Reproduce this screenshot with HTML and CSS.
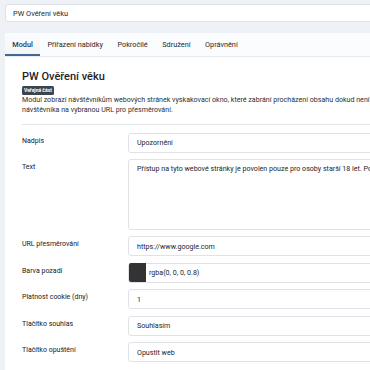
FILE: index.html
```html
<!DOCTYPE html>
<html lang="cs">
<head>
<meta charset="utf-8">
<title>PW Ověření věku</title>
<link rel="stylesheet" href="styles.css">
</head>
<body>
<div class="page">
  <input class="title-field" type="text" value="PW Ověření věku">
  <nav class="tabs">
    <span class="tab active">Modul</span>
    <span class="tab">Přiřazení nabídky</span>
    <span class="tab">Pokročilé</span>
    <span class="tab">Sdružení</span>
    <span class="tab">Oprávnění</span>
  </nav>
  <main class="card">
    <h1 class="heading">PW Ověření věku</h1>
    <span class="badge">Veřejná část</span>
    <p class="desc">Modul zobrazí návštěvníkům webových stránek vyskakovací okno, které zabrání procházení obsahu dokud není<br>návštěvníka na vybranou URL pro přesměrování.</p>
    <hr class="divider">
    <div class="row">
      <label class="label">Nadpis</label>
      <input class="field" type="text" value="Upozornění">
    </div>
    <div class="row">
      <label class="label">Text</label>
      <textarea class="field area">Přístup na tyto webové stránky je povolen pouze pro osoby starší 18 let. Pokračováním potvrzujete, že je vám více než 18 let.</textarea>
    </div>
    <div class="row">
      <label class="label">URL přesměrování</label>
      <input class="field" type="text" value="https://www.google.com">
    </div>
    <div class="row">
      <label class="label">Barva pozadí</label>
      <div class="field color-field"><span class="swatch"></span><span class="color-value">rgba(0, 0, 0, 0.8)</span></div>
    </div>
    <div class="row">
      <label class="label">Platnost cookie (dny)</label>
      <input class="field" type="text" value="1">
    </div>
    <div class="row">
      <label class="label">Tlačítko souhlas</label>
      <input class="field" type="text" value="Souhlasím">
    </div>
    <div class="row">
      <label class="label">Tlačítko opuštění</label>
      <input class="field" type="text" value="Opustit web">
    </div>
  </main>
</div>
</body>
</html>
```
FILE: styles.css
```css
html, body {
  margin: 0;
  padding: 0;
}
body {
  background: #eef2f6;
  font-family: Roboto, "Noto Sans", "Liberation Sans", sans-serif;
  color: #22262a;
  overflow: hidden;
  width: 370px;
  height: 370px;
}
.page {
  width: 800px;
  padding: 4px 0 0 5px;
}
.title-field {
  display: block;
  box-sizing: border-box;
  width: 100%;
  height: 18px;
  margin: 0;
  padding: 0 7px;
  border: 1px solid #dde2e8;
  border-radius: 3px;
  background: #fff;
  font-family: inherit;
  font-size: 7.4px;
  color: #22262a;
  outline: none;
}
.tabs {
  display: flex;
  margin-top: 11px;
  height: 24px;
  background: #fbfcfd;
  border-bottom: 1px solid #e7ebef;
  box-sizing: border-box;
}
.tab {
  display: flex;
  align-items: center;
  padding: 0 7.3px;
  font-size: 7.3px;
  color: #24292e;
}
.tab.active {
  color: #1d3b5c;
  font-weight: 500;
  background: linear-gradient(#fbfcfd, #f1f4f7);
  box-shadow: inset 0 -2px 0 #43688f;
}
.card {
  display: block;
  background: #fff;
  padding: 12.5px 0 20px 17px;
}
.heading {
  margin: 0;
  font-size: 11px;
  line-height: 13px;
  font-weight: 500;
  color: #1f2328;
}
.badge {
  display: block;
  width: fit-content;
  margin-top: 3.5px;
  padding: 0 2px;
  height: 8.5px;
  line-height: 8.5px;
  font-size: 5px;
  font-weight: 700;
  color: #fff;
  background: #3e444d;
  border-radius: 1.5px;
}
.desc {
  margin: 0;
  font-size: 7.1px;
  line-height: 10.5px;
  color: #2b3035;
  white-space: nowrap;
}
.divider {
  margin: 8px 0 8px 0;
  border: 0;
  border-top: 1px solid #e3e6ea;
}
.row {
  display: grid;
  grid-template-columns: 106px 1fr;
  margin-bottom: 6.5px;
}
.label {
  padding-top: 3px;
  font-size: 7px;
  line-height: 10px;
  font-weight: 400;
  color: #15191d;
}
.field {
  box-sizing: border-box;
  width: 100%;
  height: 20px;
  margin: 0;
  padding: 0 8px;
  border: 1px solid #dfe3e8;
  border-radius: 3px;
  background: #fff;
  font-family: inherit;
  font-size: 7.1px;
  color: #22262a;
  outline: none;
}
.area {
  display: block;
  height: 70.5px;
  padding: 3.5px 8px;
  line-height: 10px;
  resize: none;
  white-space: nowrap;
  overflow: hidden;
}
.color-field {
  display: flex;
  align-items: center;
  padding: 0;
}
.swatch {
  width: 17px;
  height: 19px;
  background: #333333;
  border-radius: 2px 0 0 2px;
}
.color-value {
  margin-left: 3px;
}
```
